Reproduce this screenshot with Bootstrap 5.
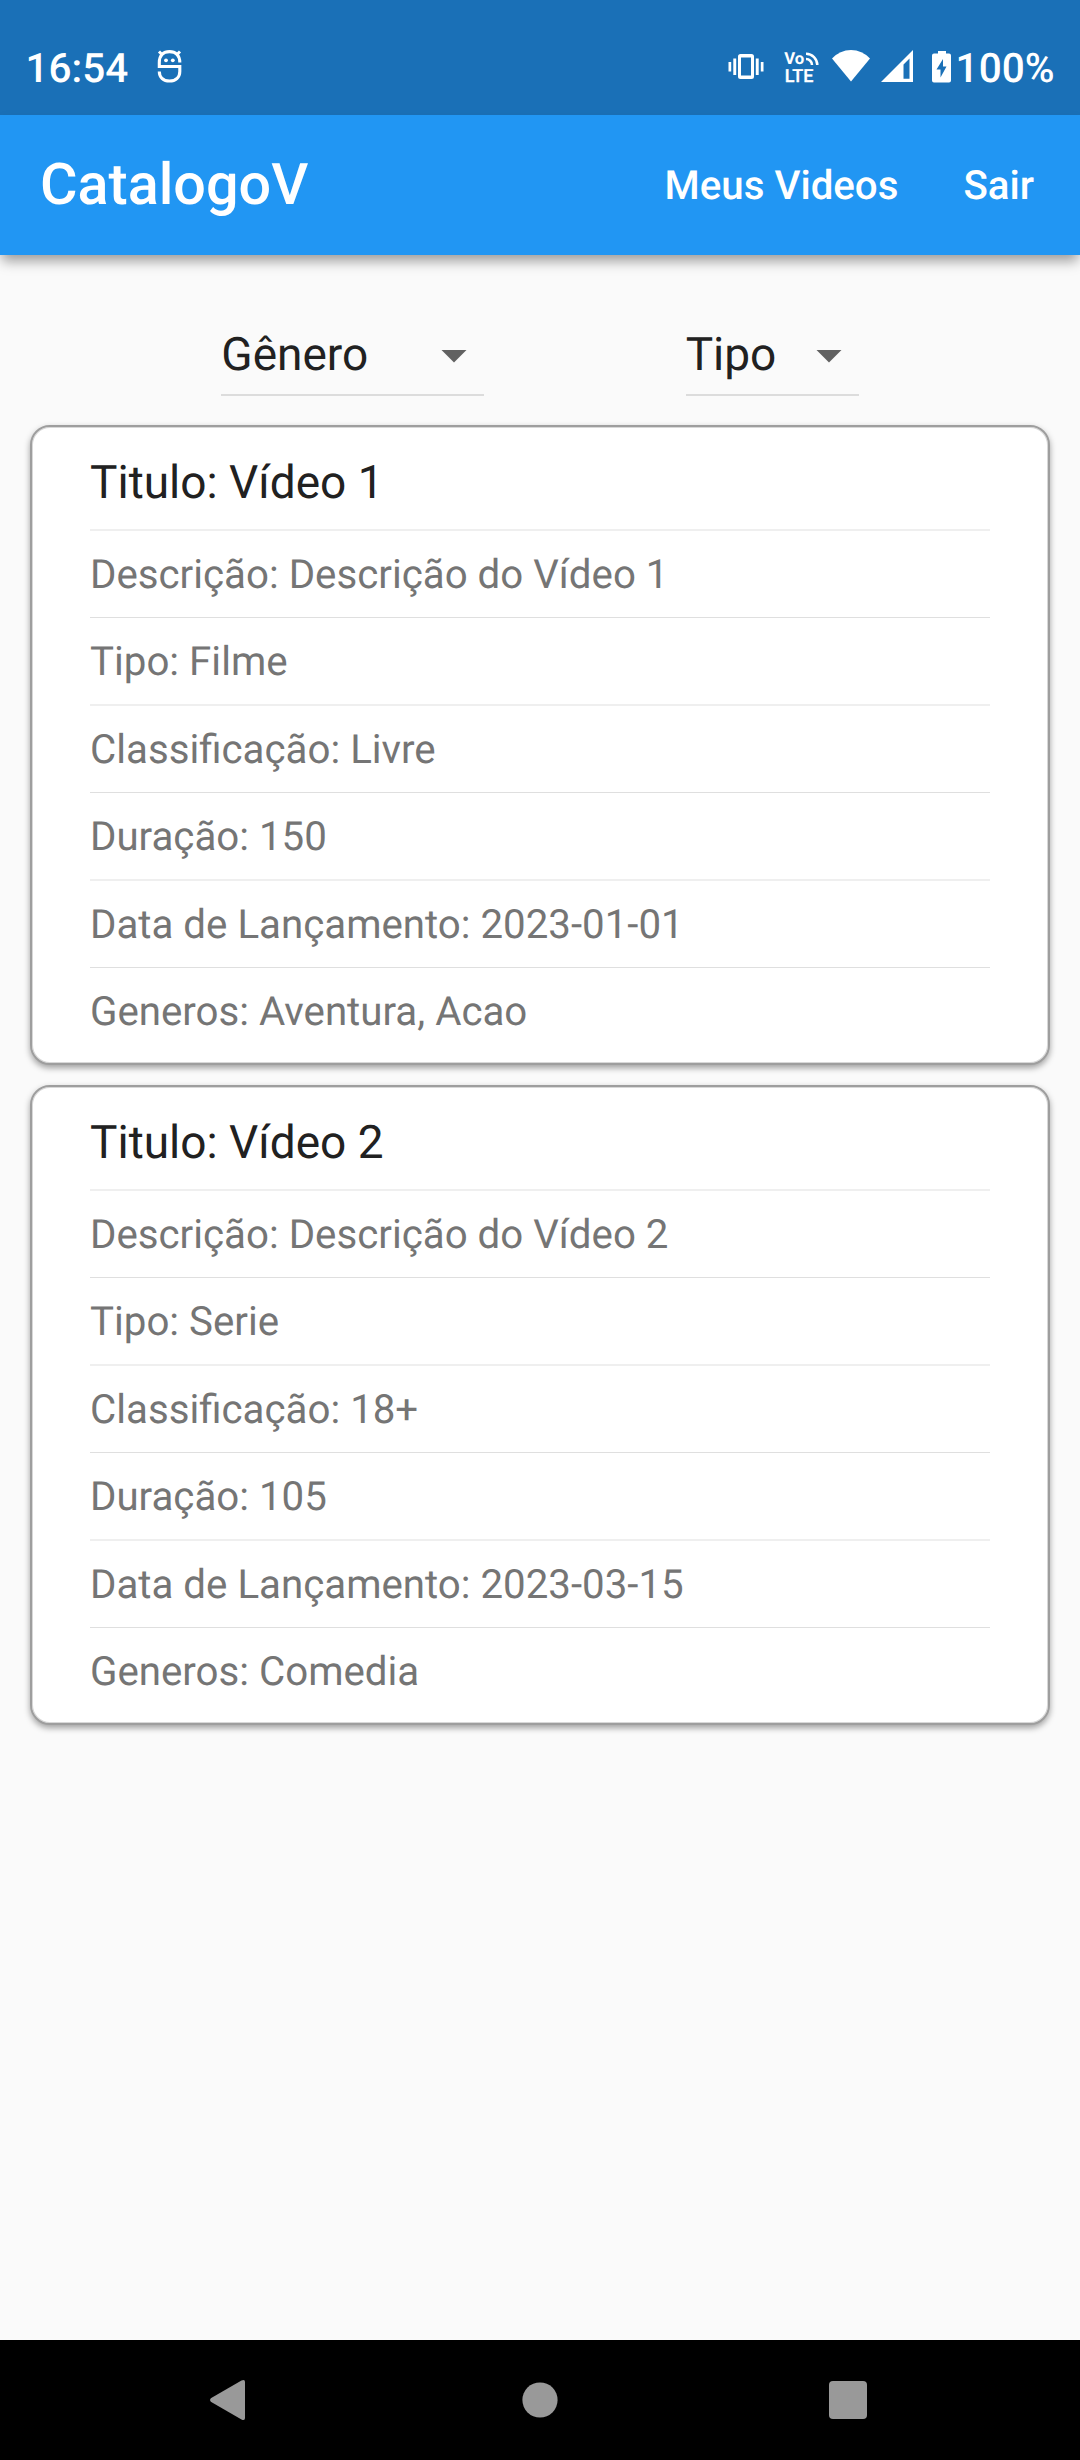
<!DOCTYPE html>
<html lang="pt-BR">
<head>
<meta charset="utf-8">
<meta name="viewport" content="width=device-width, initial-scale=1">
<title>CatalogoV</title>
<link href="https://cdn.jsdelivr.net/npm/bootstrap@5.3.0/dist/css/bootstrap.min.css" rel="stylesheet">
<style>
body{font-family:Roboto,sans-serif;background:#fafafa;color:#212121;height:2460px;line-height:1.17;text-rendering:geometricPrecision;overflow:hidden}
svg{display:block;flex:none}
.status-bar{height:115px;padding:21px 25.5px 0 25.5px;background:#1a70b7;font-size:40.5px;font-weight:500}
.status-bar span{padding-top:2px}
.clock-time{width:128.5px}
.status-icons svg{height:40px}
.app-bar{height:140px;padding:2px 46px 0 40px;background:#2196f3;box-shadow:0 8px 12px -2px rgba(0,0,0,.38)}
.app-bar .navbar-brand{font-size:57.5px;font-weight:500;line-height:1.17}
.app-bar .nav{gap:65px}
.app-bar .nav-link{font-size:40.25px;font-weight:500}
.filters{height:170px;padding:0 20px 29px}
.filter-select{height:80px;border-bottom:2px solid #dcdcdc;font-size:46px}
.filter-select span{padding-top:2px}
.filter-genre{width:263px}
.filter-type{width:173px}
.video-list{gap:20px;padding:0 30px}
.video-card{height:640px;border:2px solid #9e9e9e;border-radius:20px;padding:0 58px;box-shadow:inset 0 0 0 1px rgba(158,158,158,.4),0 3px 6px rgba(0,0,0,.36)}
.video-card .list-group-item{height:88px;padding:1px 0 0;border:0;border-bottom:2px solid #efefef;background:none;color:#757575;font-size:40.25px;display:flex;align-items:center}
.video-card .list-group-item:nth-child(even){height:87px;border-bottom:1px solid #dfdfdf}
.video-card .list-group-item:first-child{height:104px;padding-top:11px;color:#212121;font-size:46px}
.video-card .list-group-item:last-child{border:0;padding-top:0}
.system-nav{height:120px;padding:0 78px;background:#000}
</style>
</head>
<body class="d-flex flex-column">
<div class="status-bar d-flex align-items-center justify-content-between text-white">
  <div class="d-flex align-items-center">
    <span class="clock-time">16:54</span>
    <svg width="34" height="40" viewBox="154 48 34 40" fill="none" stroke="#fff" stroke-width="3.1">
      <path d="M179.8 62.5C179.8 55.5 175.5 51.6 169.5 51.6S159.3 55.5 159.3 62.5V66.5H179.8V71.5C179.8 77.500 175.500 81 169.500 81S159.300 77.500 159.300 71.500"/>
      <path d="M159 51.500l4 4M180 51.500l-4 4" stroke-width="3"/>
      <circle cx="166" cy="60.300" r="1.900" fill="#fff" stroke="none"/><circle cx="172.800" cy="60.300" r="1.900" fill="#fff" stroke="none"/>
    </svg>
  </div>
  <div class="status-icons d-flex align-items-center">
    <svg width="44" viewBox="724 48 44 40" fill="#fff">
      <path fill-rule="evenodd" d="M740.5 54h11a2.5 2.5 0 0 1 2.5 2.5v20a2.5 2.5 0 0 1-2.5 2.5h-11a2.5 2.5 0 0 1-2.5-2.5v-20a2.5 2.5 0 0 1 2.5-2.5zM741 57.5v18h10v-18z"/>
      <path d="M728.5 62h2.7v9.500h-2.700zM733.300 58.500h2.900v16.500h-2.900zM755.800 58.500h2.900v16.500h-2.900zM760.800 62h2.700v9.500h-2.700z"/>
    </svg>
    <svg class="ms-3" width="42" viewBox="784 48 42 40" fill="#fff">
      <g font-family="Roboto" font-weight="700"><text x="784.300" y="64.300" font-size="16.500" textLength="20" lengthAdjust="spacingAndGlyphs">Vo</text><text x="784.800" y="82" font-size="18" font-weight="500" stroke="#fff" stroke-width=".3" textLength="28.500" lengthAdjust="spacing">LTE</text></g>
      <path d="M806 53.700A11.300 11.300 0 0 1 817.300 65M806 59A6 6 0 0 1 812 65" fill="none" stroke="#fff" stroke-width="2.500"/>
    </svg>
    <svg width="52" viewBox="826 48 52 40" fill="#fff"><path d="M851 81.500L832 58.500Q840 50 851 50T870 58.500z"/></svg>
    <svg width="50" viewBox="878 48 50 40" fill="#fff"><path fill-rule="evenodd" d="M881 82L913 50V82zM903.500 64.500V78.800H909.500V58.500z"/></svg>
    <svg width="28" viewBox="928 48 28 40" fill="#fff"><path fill-rule="evenodd" d="M938 51h8v2.500h3a2 2 0 0 1 2 2v25a2 2 0 0 1-2 2h-15a2 2 0 0 1-2-2v-25a2 2 0 0 1 2-2h4zM943 59L936.500 69.500H940.500V77.500L946.500 66.500H943z"/></svg>
    <span>100%</span>
  </div>
</div>

<nav class="app-bar navbar flex-nowrap justify-content-between">
  <a class="navbar-brand text-white p-0 m-0" href="#">CatalogoV</a>
  <div class="nav flex-nowrap">
    <a class="nav-link text-white p-0" href="#">Meus Videos</a>
    <a class="nav-link text-white p-0" href="#">Sair</a>
  </div>
</nav>

<main class="flex-grow-1">
  <div class="filters d-flex justify-content-evenly align-items-end">
    <div class="filter-select filter-genre d-flex justify-content-between align-items-center"><span>Gênero</span>
      <svg width="60" height="60" viewBox="0 0 24 24" fill="#616161"><path d="M7 10l5 5 5-5z"/></svg>
    </div>
    <div class="filter-select filter-type d-flex justify-content-between align-items-center"><span>Tipo</span>
      <svg width="60" height="60" viewBox="0 0 24 24" fill="#616161"><path d="M7 10l5 5 5-5z"/></svg>
    </div>
  </div>
  <div class="video-list d-flex flex-column">
    <div class="card video-card">
      <ul class="list-group list-group-flush">
        <li class="list-group-item">Titulo: Vídeo 1</li>
        <li class="list-group-item">Descrição: Descrição do Vídeo 1</li>
        <li class="list-group-item">Tipo: Filme</li>
        <li class="list-group-item">Classificação: Livre</li>
        <li class="list-group-item">Duração: 150</li>
        <li class="list-group-item">Data de Lançamento: 2023-01-01</li>
        <li class="list-group-item">Generos: Aventura, Acao</li>
      </ul>
    </div>
    <div class="card video-card">
      <ul class="list-group list-group-flush">
        <li class="list-group-item">Titulo: Vídeo 2</li>
        <li class="list-group-item">Descrição: Descrição do Vídeo 2</li>
        <li class="list-group-item">Tipo: Serie</li>
        <li class="list-group-item">Classificação: 18+</li>
        <li class="list-group-item">Duração: 105</li>
        <li class="list-group-item">Data de Lançamento: 2023-03-15</li>
        <li class="list-group-item">Generos: Comedia</li>
      </ul>
    </div>
  </div>
</main>

<footer class="system-nav d-flex align-items-center">
  <div class="flex-fill d-flex justify-content-center"><svg width="60" height="60" viewBox="0 0 60 60" fill="#999"><path d="M8.800 28.200L39.500 10.500Q43 9 43 12V48Q43 51 39.500 49.500L8.800 31.800Q7 30 8.800 28.200z"/></svg></div>
  <div class="flex-fill d-flex justify-content-center"><svg width="60" height="60" viewBox="0 0 60 60" fill="#999"><circle cx="30" cy="30" r="17.600"/></svg></div>
  <div class="flex-fill d-flex justify-content-center"><svg width="60" height="60" viewBox="0 0 60 60" fill="#999"><rect x="11" y="11" width="38" height="38" rx="4"/></svg></div>
</footer>
</body>
</html>
